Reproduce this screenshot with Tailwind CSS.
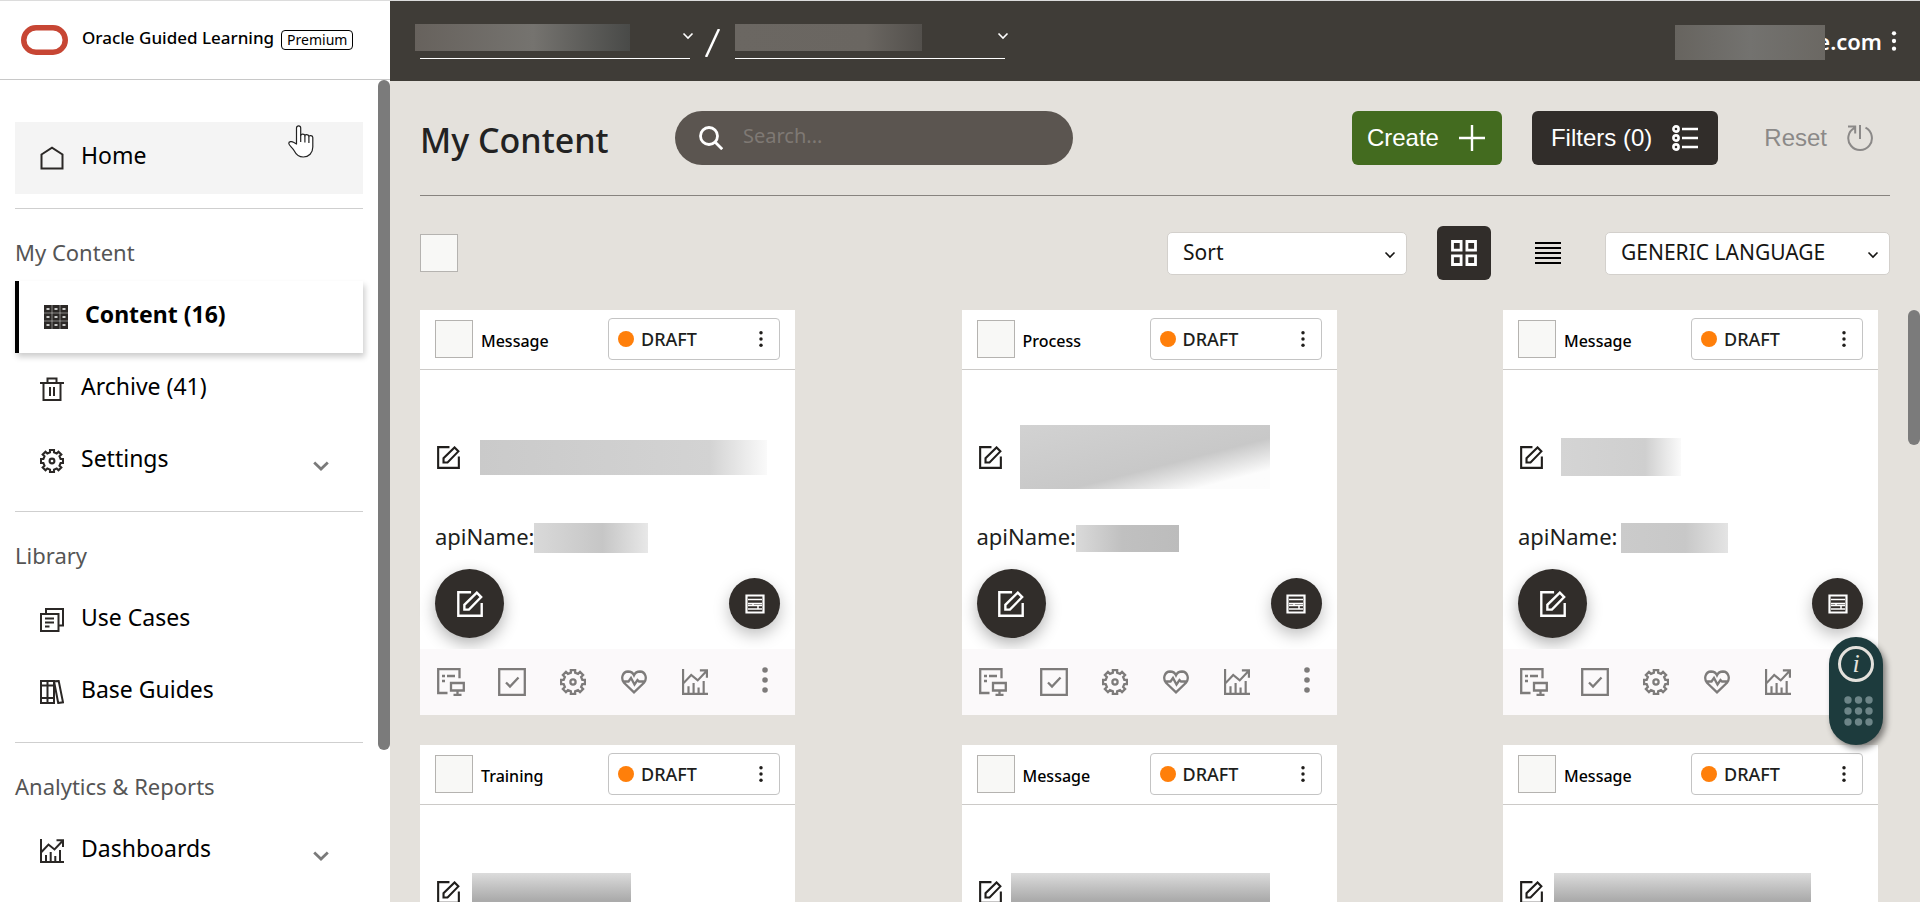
<!DOCTYPE html>
<html lang="en">
<head>
  <meta charset="utf-8">
  <title>Oracle Guided Learning</title>
  <script src="https://cdn.jsdelivr.net/npm/@tailwindcss/browser@4"></script>
</head>
<body class="h-screen overflow-hidden bg-[#e4e1dc] font-['Noto_Sans',sans-serif] text-black">

  <!-- Icon sprite -->
  <svg class="hidden">
    <symbol id="i-home" viewBox="0 0 24 24" fill="none" stroke="currentColor" stroke-width="2"><path d="M1.500 8.500 12 1.700l10.500 6.800V22.500h-21z"/></symbol>
    <symbol id="i-grid" viewBox="0 0 24 24"><path fill="currentColor" d="M0 0h24v24H0z"/><path stroke="#fff" stroke-opacity=".55" stroke-width=".8" d="M8 0v24M16 0v24M0 8h24M0 16h24"/><path stroke="#fff" stroke-width="1.600" d="M2.500 4h3M10.500 4h3M18.500 4h3M2.500 12h3M10.500 12h3M18.500 12h3M2.500 20h3M10.500 20h3M18.500 20h3"/></symbol>
    <symbol id="i-trash" viewBox="0 0 24 24" fill="none" stroke="currentColor" stroke-width="2"><path d="M0 6h24M3.500 6v17h17V6M7.500 6V1.500h9V6M10 10v9M14 10v9"/></symbol>
    <symbol id="i-gear" viewBox="0 0 24 24" fill="none" stroke="currentColor" stroke-width="2.100"><path d="M10 1h4v2.400l2.670 1.100 1.830-1.830 2.830 2.830-1.830 1.830L20.600 10H23v4h-2.400l-1.100 2.670 1.830 1.830-2.830 2.830-1.830-1.830L14 20.600V23h-4v-2.400l-2.670-1.100-1.830 1.830-2.830-2.830 1.830-1.830L3.400 14H1v-4h2.400l1.100-2.670L2.670 5.500 5.500 2.670 7.330 4.500 10 3.400z"/><circle cx="12" cy="12" r="2.400"/></symbol>
    <symbol id="i-cases" viewBox="0 0 24 24" fill="none" stroke="currentColor" stroke-width="2"><path d="M1 6h17.500v17H1zM6 6V1h17v16.500h-4.500M5 10.500h9M5 14.500h9M5 18.500h4.500"/></symbol>
    <symbol id="i-books" viewBox="0 0 24 24" fill="none" stroke="currentColor" stroke-width="2"><path d="M1 1h6.500v22H1zM7.500 1H14v22H7.500zM1 5.500h13M1 18h13M14 1.200l4.700-.2L23 22.300l-4.800.7z"/></symbol>
    <symbol id="i-chart" viewBox="0 0 24 24" fill="none" stroke="currentColor" stroke-width="2"><path d="M1 0v23h23M1 13.500l7.500-8 6 5L22 2.500M16.500 1.200H23V8M6 23v-7M10.700 23V13M15.300 23v-6M20 23V11"/></symbol>
    <symbol id="i-edit" viewBox="0 0 24 24" fill="none" stroke="currentColor" stroke-width="2.200"><path d="M13 1.200H1.200v21.600h21.600V11M6.800 17.200v-4.400L18.300 1.500l4 4.100-11.300 11.600z"/></symbol>
    <symbol id="i-chevron" viewBox="0 0 16 10" fill="none" stroke="currentColor" stroke-width="2.800"><path d="m1.200 1.500 6.800 6.500 6.800-6.500"/></symbol>
    <symbol id="i-caret" viewBox="0 0 12 8" fill="none" stroke="currentColor" stroke-width="1.600"><path d="m1.500 1.500 4.500 4.500 4.500-4.500"/></symbol>
    <symbol id="i-search" viewBox="0 0 24 24" fill="none" stroke="currentColor" stroke-width="2.800"><circle cx="10" cy="10" r="8.500"/><path d="m16 16 7.200 7.200"/></symbol>
    <symbol id="i-plus" viewBox="0 0 26 26" stroke="currentColor" stroke-width="2.400"><path d="M13 0v26M0 13h26"/></symbol>
    <symbol id="i-filter" viewBox="0 0 26 26" fill="none" stroke="currentColor" stroke-width="2.600"><circle cx="4" cy="4" r="2.600"/><circle cx="4" cy="13" r="2.600"/><circle cx="4" cy="22" r="2.600"/><path d="M10 4h16M10 13h16M10 22h16"/></symbol>
    <symbol id="i-reset" viewBox="0 0 26 26" fill="none" stroke="currentColor" stroke-width="2"><path d="M18.500 2.700A11.800 11.800 0 1 1 7.500 2.800M1 1.500h7.200v7M13 0v14"/></symbol>
    <symbol id="i-tiles" viewBox="0 0 26 26" fill="none" stroke="currentColor" stroke-width="2.800"><path d="M1.500 1.500h8.600v8.600H1.500zM15.900 1.500h8.600v8.600h-8.600zM1.500 15.900h8.600v8.600H1.500zM15.900 15.900h8.600v8.600h-8.600z"/></symbol>
    <symbol id="i-rows" viewBox="0 0 26 22" stroke="currentColor" stroke-width="2"><path d="M0 1h26M0 6h26M0 11h26M0 16h26M0 21h26"/></symbol>
    <symbol id="i-form" viewBox="0 0 20 20" fill="none" stroke="currentColor" stroke-width="2.200"><path d="M1.500 1.500h17v17h-17z"/><path stroke-width="1.500" d="M3 5.500h14M3 9.500h14M3 11.500h14M3 15h14M8 9v3M13 12v3"/></symbol>
    <symbol id="i-display" viewBox="0 0 28 28" fill="none" stroke="currentColor" stroke-width="2.300"><path d="M10.500 25H1.200V1.200h21.300v9M5 8h3M10 8h8M5 13h3M14 15h12.800v7.500H14zM20.500 22v4.500M16.500 26.800h8"/></symbol>
    <symbol id="i-check" viewBox="0 0 28 28" fill="none" stroke="currentColor" stroke-width="2.300"><path d="M1.200 1.200h25.600v25.600H1.200zM8 14.500l4 4 8.500-9"/></symbol>
    <symbol id="i-heart" viewBox="0 0 26 24" fill="none" stroke="currentColor" stroke-width="2.300"><path d="M13 22.300 3 12.800C-.5 8.500 1.500 1.700 7 1.500c3 0 5 1.500 6 3.700 1-2.200 3-3.700 6-3.700 5.500.2 7.500 7 4 11.300zM1.500 11.500h6l2.500-3.500 3.500 6.500 3-4.500 1.500 1.500h6.500"/></symbol>
    <symbol id="i-dots" viewBox="0 0 6 26" fill="currentColor"><circle cx="3" cy="3" r="2.800"/><circle cx="3" cy="13" r="2.800"/><circle cx="3" cy="23" r="2.800"/></symbol>
  </svg>

  <div class="flex h-full border-t border-[#dcdcdc]">
    <!-- Sidebar -->
    <aside class="relative flex w-[390px] shrink-0 flex-col bg-white">
      <div class="flex h-[79px] shrink-0 items-center border-b border-[#c8c8c8] pl-[21px]">
        <svg class="h-[30px] w-[47px] shrink-0" viewBox="0 0 47 30" fill="none" stroke="#c74634" stroke-width="5.500"><rect x="2.750" y="2.750" width="41.500" height="24.500" rx="12.250"/></svg>
        <span class="ml-[14px] pb-1 text-[17px] leading-6 font-medium whitespace-nowrap">Oracle Guided Learning</span>
        <span class="ml-[7px] flex h-5 items-center rounded border border-black px-[5px] text-sm leading-none">Premium</span>
      </div>

      <nav class="flex flex-col pt-[42px] pr-[27px] pl-[15px] text-[23px]">
        <a href="#" class="flex h-[72px] items-center bg-[#f4f4f4] pl-[25px]"><svg class="mr-[17px] size-6 text-[#2b2826]"><use href="#i-home"/></svg><span class="pb-[6px]">Home</span></a>
        <hr class="mt-[14px] border-[#cfcfcf]">
        <h2 class="h-[72px] pt-3 text-[22px] leading-[62px] text-[#555]">My Content</h2>
        <a href="#" class="flex h-[72px] items-center border-l-4 border-black pl-[25px] font-bold shadow-[2px_4px_6px_rgba(0,0,0,0.2)]"><svg class="mr-[17px] size-6 text-[#2b2826]"><use href="#i-grid"/></svg><span class="pb-[6px]">Content (16)</span></a>
        <a href="#" class="flex h-[72px] items-center pl-[25px]"><svg class="mr-[17px] size-6 text-[#2b2826]"><use href="#i-trash"/></svg><span class="pb-[6px]">Archive (41)</span></a>
        <a href="#" class="flex h-[72px] items-center pl-[25px]"><svg class="mr-[17px] size-6 text-[#2b2826]"><use href="#i-gear"/></svg><span class="pb-[6px]">Settings</span><svg class="mt-[10px] mr-[34px] ml-auto h-[10px] w-4 text-[#7a7a7a]"><use href="#i-chevron"/></svg></a>
        <hr class="mt-[14px] border-[#cfcfcf]">
        <h2 class="h-[72px] pt-3 text-[22px] leading-[62px] text-[#555]">Library</h2>
        <a href="#" class="flex h-[72px] items-center pl-[25px]"><svg class="mr-[17px] size-6 text-[#2b2826]"><use href="#i-cases"/></svg><span class="pb-[6px]">Use Cases</span></a>
        <a href="#" class="flex h-[72px] items-center pl-[25px]"><svg class="mr-[17px] size-6 text-[#2b2826]"><use href="#i-books"/></svg><span class="pb-[6px]">Base Guides</span></a>
        <hr class="mt-[14px] border-[#cfcfcf]">
        <h2 class="h-[72px] pt-3 text-[22px] leading-[62px] text-[#555]">Analytics &amp; Reports</h2>
        <a href="#" class="flex h-[72px] items-center pl-[25px]"><svg class="mr-[17px] size-6 text-[#2b2826]"><use href="#i-chart"/></svg><span class="pb-[6px]">Dashboards</span><svg class="mt-[10px] mr-[34px] ml-auto h-[10px] w-4 text-[#7a7a7a]"><use href="#i-chevron"/></svg></a>
      </nav>

      <!-- Scroll thumb -->
      <div class="absolute top-[79px] right-0 h-[670px] w-3 rounded-full bg-[#7b7b7b]"></div>

      <!-- Pointer -->
      <svg class="absolute top-[124px] left-[288px] h-[33px] w-[26px]" viewBox="0 0 26 33" fill="#fff" stroke="#222" stroke-width="1.200" stroke-linejoin="round"><path d="M8.500 19V3a2 2 0 0 1 4.200 0v7.500c0-1.800 4-1.800 4.200.3 0-1.800 3.900-1.500 4 .8.300-1.600 3.900-1.300 3.900 1V22c0 6-4 10-9.500 10-5 0-7.500-3-9.300-6.500C4.500 22.500 1 20.500.8 18.500c-.2-2 3-2.500 4.700-1.200z"/><path d="M12.700 9.500V17M16.900 11v6.500M20.900 12v6"/></svg>
    </aside>

    <div class="relative flex min-w-0 grow flex-col">
      <!-- Top bar -->
      <header class="flex h-20 shrink-0 items-start bg-[#3f3c37] pr-[23px] pl-[30px] text-white">
        <button aria-label="Account" class="mt-4 flex h-[42px] w-[270px] items-start justify-between border-b border-white pt-[7px]">
          <span class="-ml-[5px] h-[27px] w-[215px] bg-linear-to-r from-[#67625d] via-[#75736f] via-55% to-[#494a48]"></span>
          <svg class="mt-2 -mr-1 h-2 w-3"><use href="#i-caret"/></svg>
        </button>
        <svg class="mx-[15px] mt-7 h-7 w-[15px]" viewBox="0 0 15 28" stroke="#fff" stroke-width="2.500"><path d="M1 28 14 0"/></svg>
        <button aria-label="Application" class="mt-4 flex h-[42px] w-[270px] items-start justify-between border-b border-white pt-[7px]">
          <span class="h-[27px] w-[187px] bg-linear-to-r from-[#6b6762] via-[#6a6661] via-70% to-[#53504c]"></span>
          <svg class="mt-2 -mr-1 h-2 w-3"><use href="#i-caret"/></svg>
        </button>
        <button class="mt-6 ml-auto flex items-center">
          <span class="z-10 h-[35px] w-[150px] bg-linear-to-r from-[#67645f] via-[#73726f] to-[#6b6863]"></span>
          <span class="-ml-2 pb-[3px] text-[22px] leading-8 font-semibold">e.com</span>
          <svg class="mb-[3px] ml-[9px] h-5 w-[6px]"><use href="#i-dots"/></svg>
        </button>
      </header>

      <main class="flex flex-col pr-[30px] pl-[30px]">
        <!-- Title row -->
        <div class="flex h-[115px] items-center border-b border-[#87837f] font-['Liberation_Sans',sans-serif] text-2xl">
          <h1 class="w-[255px] pt-1 font-['Noto_Sans',sans-serif] text-[34px] leading-none font-medium text-[#222]">My Content</h1>
          <label class="flex h-[54px] w-[398px] items-center rounded-full bg-[#5b5550] pl-6 text-white">
            <svg class="size-6 shrink-0"><use href="#i-search"/></svg>
            <input type="text" aria-label="Search" placeholder="Search..." class="ml-5 w-full bg-transparent pb-1 font-['Noto_Sans',sans-serif] text-[20px] outline-none placeholder:text-[#7f7974]">
          </label>
          <button class="ml-auto flex h-[54px] items-center rounded-md bg-[#436b1f] pr-[17px] pl-[15px] text-white">Create<svg class="ml-5 size-[26px]"><use href="#i-plus"/></svg></button>
          <button class="ml-[30px] flex h-[54px] items-center rounded-md bg-[#312d2a] pr-5 pl-[19px] text-white">Filters (0)<svg class="ml-5 size-[26px]"><use href="#i-filter"/></svg></button>
          <button class="ml-[30px] flex h-[54px] items-center pr-[17px] pl-4 text-[#8b8988]">Reset<svg class="ml-5 size-[26px]"><use href="#i-reset"/></svg></button>
        </div>

        <!-- Toolbar -->
        <div class="flex h-[114px] items-center text-[21px] text-[#161513]">
          <input type="checkbox" aria-label="Select all" class="size-[38px] appearance-none border border-[#b5b3b0] bg-[#f8f8f6]">
          <div class="relative ml-auto">
            <select aria-label="Sort" class="h-[43px] w-[240px] appearance-none rounded-[5px] border border-[#d3d0cc] bg-white px-[15px]"><option>Sort</option></select>
            <svg class="pointer-events-none absolute top-[19px] right-[11px] h-2 w-3"><use href="#i-caret"/></svg>
          </div>
          <button aria-label="Grid view" class="ml-[30px] flex size-[54px] items-center justify-center rounded-md bg-[#312d2a] text-white"><svg class="size-[26px]"><use href="#i-tiles"/></svg></button>
          <button aria-label="List view" class="ml-[30px] flex size-[54px] items-center justify-center text-black"><svg class="h-[22px] w-[26px]"><use href="#i-rows"/></svg></button>
          <div class="relative ml-[30px]">
            <select aria-label="Language" class="h-[43px] w-[285px] appearance-none rounded-[5px] border border-[#d3d0cc] bg-white px-[15px]"><option>GENERIC LANGUAGE</option></select>
            <svg class="pointer-events-none absolute top-[19px] right-[11px] h-2 w-3"><use href="#i-caret"/></svg>
          </div>
        </div>

        <!-- Cards -->
        <div id="cards" class="grid grid-cols-[repeat(3,375px)] justify-between gap-y-[30px] pr-3"></div>
      </main>

      <!-- Scroll thumb -->
      <div class="absolute top-[309px] right-0 h-[135px] w-3 rounded-full bg-[#7b7b7b]"></div>

      <!-- Help widget -->
      <button aria-label="Help" class="absolute top-[636px] right-[37px] flex h-[108px] w-[54px] flex-col items-center rounded-full bg-[#1d3b3d] pt-[9px] shadow-[3px_4px_6px_rgba(0,0,0,0.45)]">
        <span class="flex size-9 items-center justify-center rounded-full border-[3px] border-[#e4e1dc] font-['Liberation_Serif',serif] text-[26px] leading-none text-[#e4e1dc] italic">i</span>
        <svg class="mt-[14px] ml-1 h-[30px] w-[29px]" viewBox="0 0 29 30" fill="#6d8588"><circle cx="4" cy="4" r="3.700"/><circle cx="14.500" cy="4" r="3.700"/><circle cx="25" cy="4" r="3.700"/><circle cx="4" cy="15" r="3.700"/><circle cx="14.500" cy="15" r="3.700"/><circle cx="25" cy="15" r="3.700"/><circle cx="4" cy="26" r="3.700"/><circle cx="14.500" cy="26" r="3.700"/><circle cx="25" cy="26" r="3.700"/></svg>
      </button>
    </div>
  </div>

  <script>
    // title / api hold the classes of the masked values
    const cards = [
      { type: 'Message',
        title: 'ml-5 h-[35px] w-[287px] bg-linear-to-r from-[#cacaca] via-[#d3d3d3] via-80% to-[#fafafa]',
        api: 'h-[30px] w-[114px] bg-linear-to-r from-[#d9d9d9] via-[#c6c6c6] via-60% to-[#e8e8e8]' },
      { type: 'Process',
        title: 'ml-[18px] h-16 w-[250px] bg-linear-to-br from-[#d2d2d2] via-[#c8c8c8] via-60% to-[#fcfcfc] to-85%',
        api: 'h-[27px] w-[103px] bg-linear-to-r from-[#dadada] via-[#c0c0c0] via-45% to-[#bcbcbc]' },
      { type: 'Message',
        title: 'ml-[18px] h-[38px] w-[120px] bg-linear-to-r from-[#d4d4d4] via-[#cfcfcf] via-70% to-[#fafafa]',
        api: 'ml-1 h-[30px] w-[107px] bg-linear-to-r from-[#cbcbcb] via-[#c8c8c8] via-60% to-[#e4e4e4]' },
      { type: 'Training',
        title: 'ml-3 h-[54px] w-[159px] mt-4 bg-linear-to-b from-[#dcdcdc] to-[#ababab] to-50%',
        api: 'h-[30px] w-[114px] bg-[#cfcfcf]' },
      { type: 'Message',
        title: 'ml-[9px] h-[54px] w-[259px] mt-4 bg-linear-to-b from-[#dcdcdc] to-[#ababab] to-50%',
        api: 'h-[30px] w-[114px] bg-[#cfcfcf]' },
      { type: 'Message',
        title: 'ml-[11px] h-[54px] w-[257px] mt-4 bg-linear-to-b from-[#dcdcdc] to-[#ababab] to-50%',
        api: 'h-[30px] w-[114px] bg-[#cfcfcf]' }
    ];

    function renderCards() {
      document.getElementById('cards').innerHTML = cards.map((card, n) => `
        <article class="bg-white text-[#201e1c]">
          <div class="flex h-[60px] items-center border-b border-[#cccac8] px-[15px] pb-[2px]">
            <input type="checkbox" id="pick${n}" class="size-[38px] appearance-none border border-[#b5b3b0] bg-[#f8f8f6]">
            <label for="pick${n}" class="ml-2 pt-1 text-base font-medium text-black">${card.type}</label>
            <button class="ml-auto flex h-[42px] w-[172px] items-center rounded border border-[#c4c4c4] pr-4 pl-[9px] text-lg font-medium">
              <span class="mr-[7px] size-4 rounded-full bg-[#ff7f0a]"></span>DRAFT
              <svg class="ml-auto h-4 w-1"><use href="#i-dots"/></svg>
            </button>
          </div>
          <div class="px-[15px] pt-[55px] pb-[11px]">
            <div class="flex h-16 items-center pl-[2px]">
              <button aria-label="Edit name" class="size-[23px]"><svg class="size-[23px]"><use href="#i-edit"/></svg></button>
              <span class="${card.title}"></span>
            </div>
            <div class="mt-[34px] flex h-[30px] items-center text-[22px]"><span class="pb-1">apiName:</span><span class="${card.api}"></span></div>
            <div class="mt-4 flex items-center justify-between text-white">
              <button aria-label="Edit" class="flex size-[69px] items-center justify-center rounded-full bg-[#312d2a] shadow-[0_6px_16px_rgba(0,0,0,0.3)]"><svg class="size-[26px]"><use href="#i-edit"/></svg></button>
              <button aria-label="Details" class="flex size-[51px] items-center justify-center rounded-full bg-[#312d2a] shadow-[0_6px_16px_rgba(0,0,0,0.25)]"><svg class="size-5"><use href="#i-form"/></svg></button>
            </div>
          </div>
          <div class="relative flex h-[66px] items-center bg-[#fbf9fa] pr-[27px] pl-[17px] text-[#7d7b7a]">
            <button aria-label="Display" class="size-7"><svg class="size-7"><use href="#i-display"/></svg></button>
            <button aria-label="Tasks" class="ml-[33px] size-7"><svg class="size-7"><use href="#i-check"/></svg></button>
            <button aria-label="Settings" class="ml-[34px] size-[26px]"><svg class="size-[26px]"><use href="#i-gear"/></svg></button>
            <button aria-label="Health" class="ml-[35px] h-6 w-[26px]"><svg class="h-6 w-[26px]"><use href="#i-heart"/></svg></button>
            <button aria-label="Analytics" class="ml-[35px] size-[26px]"><svg class="size-[26px]"><use href="#i-chart"/></svg></button>
            <button aria-label="More" class="mb-1 ml-auto h-[26px] w-[6px]"><svg class="h-[26px] w-[6px]"><use href="#i-dots"/></svg></button>
          </div>
        </article>
      `).join('');
    }

    renderCards();
  </script>
</body>
</html>
